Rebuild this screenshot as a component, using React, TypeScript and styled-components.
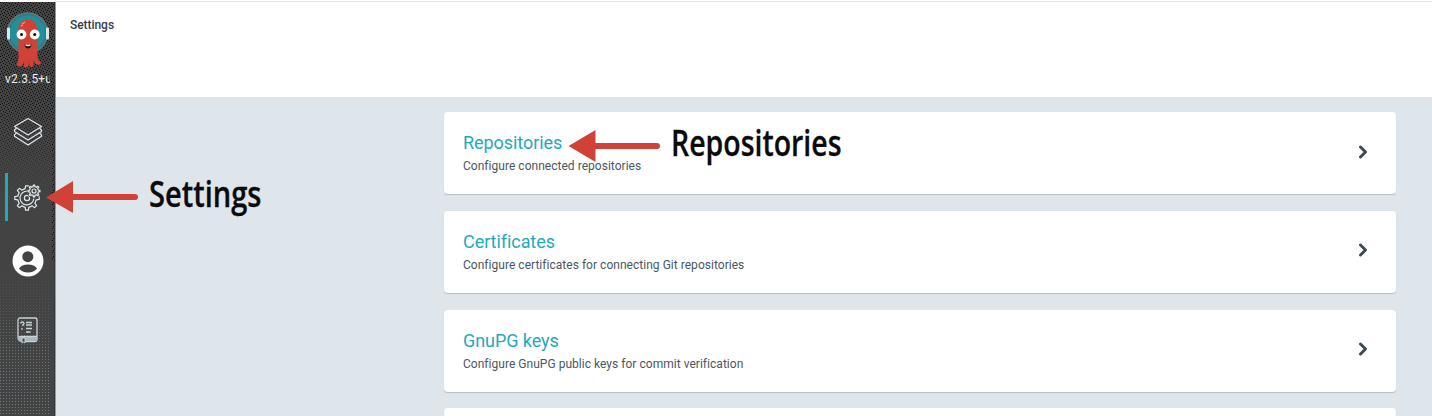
import React from "react";
import styled, { createGlobalStyle } from "styled-components";

const GlobalStyle = createGlobalStyle`
  * { box-sizing: border-box; }
  body { margin: 0; font-family: Roboto, "Liberation Sans", sans-serif; background: #fff; overflow: hidden; }
`;

const Page = styled.div`
  position: relative;
  display: flex;
  width: 1432px;
  height: 416px;
  padding-top: 1px;
  overflow: hidden;
  background: #fff;
`;

const Sidebar = styled.nav`
  position: relative;
  display: flex;
  flex-direction: column;
  align-items: flex-start;
  flex: 0 0 56px;
  margin-top: 1px;
  border-right: 1px solid #8f999f;
  background: #434343;
`;

const Grain = styled.svg`
  position: absolute;
  inset: 0;
  width: 55px;
  height: 414px;
`;

const Brand = styled.div`
  position: relative;
  height: 88px;
  width: 55px;
  padding: 9px 5px 0;
  svg { display: block; margin-left: 1px; }
`;

const Version = styled.div`
  width: 45px;
  margin-top: 2px;
  overflow: hidden;
  white-space: nowrap;
  color: #e6ecee;
  font-size: 12px;
  line-height: 14px;
  letter-spacing: 0.15px;
`;

const NavItem = styled.a<{ $height: number; $active?: boolean }>`
  position: relative;
  display: flex;
  align-items: center;
  justify-content: center;
  width: 45px;
  height: ${(p) => p.$height}px;
  box-shadow: ${(p) => (p.$active ? "inset 3px 0 #22aabb" : "none")};
  svg { display: block; }
`;

const NavList = styled.div`
  position: relative;
  display: flex;
  flex-direction: column;
  align-items: center;
  padding: 18px 5px 0;
  gap: 17px;
`;

const Main = styled.main`
  flex: 1;
  border-top: 1px solid #dee4e8;
  background: #dee5eb;
`;

const Header = styled.header`
  height: 95px;
  padding: 15px 0 0 14px;
  background: #fff;
  color: #363c4a;
  font-size: 12px;
  font-weight: 500;
  line-height: 16px;
  letter-spacing: -0.05px;
`;

const CardList = styled.div`
  display: flex;
  flex-direction: column;
  gap: 16.7px;
  width: 952px;
  margin: 15.2px 0 0 388px;
`;

const Card = styled.section`
  display: flex;
  align-items: center;
  justify-content: space-between;
  flex: 0 0 82px;
  padding: 0 28px 3px 19px;
  border-radius: 4px;
  background: #fff;
  box-shadow: 0 1px 1px #b4bdc3;
`;

const CardTitle = styled.h2`
  margin: 2.500px 0 3px;
  color: #1faabb;
  font-size: 18px;
  font-weight: 400;
  line-height: 24px;
  letter-spacing: -0.06px;
`;

const CardText = styled.p`
  margin: 0;
  color: #495763;
  font-size: 12px;
  line-height: 16px;
  letter-spacing: 0.03px;
`;

const Annotations = styled.svg`
  position: absolute;
  inset: 0;
  pointer-events: none;
  text {
    font-family: "Open Sans", "Noto Sans", sans-serif;
    font-weight: 600;
    fill: #0b0b0d;
    stroke: #0b0b0d;
    stroke-width: 0.3px;
  }
`;

const Logo = () => (
  <svg width="43" height="59" viewBox="0 0 43 59">
    <circle cx="21.5" cy="22" r="20" fill="#277f88" stroke="#5c7b80" strokeWidth="1.500" />
    <circle cx="21.5" cy="22" r="17.500" fill="#258f99" />
    <rect x="1" y="16.500" width="3" height="12" rx="1" fill="#dce5e8" />
    <rect x="40" y="16.500" width="3" height="12" rx="1" fill="#dce5e8" />
    <path
      d="M12.500 24V18.500C12.500 12 16 8.500 21.500 8.500S31.500 12 31.500 18.500V45C31.500 50 34 50 35 51.500 34.500 54.500 30 54.500 28.500 51L27.500 49C27.500 52 28.500 56 25.500 56S23.500 53 23 50C22.500 53 23.500 56.500 20 56.500S18 53 18 50C17 52 17 55.500 14 55.500 11 55.500 12 54 10.500 53.500 11.500 52 12.500 50 12.500 46Z"
      fill="#d04238"
    />
    <path d="m16 13 3-2M15 15l2-1" stroke="#e99a91" strokeWidth="1.300" />
    <circle cx="15.500" cy="23.500" r="4.900" fill="#fff" />
    <circle cx="28.700" cy="23.500" r="4.900" fill="#fff" />
    <circle cx="15.500" cy="23.500" r="1.500" fill="#111" />
    <circle cx="28.700" cy="23.500" r="1.500" fill="#111" />
    <path d="M18.500 33q3.500 2 7 0-.5 4.500-3.500 4.500T18.500 33Z" fill="#171717" />
    <path d="M19.500 33.800q2.500 1.500 5 0" stroke="#fff" strokeWidth="1.300" fill="none" />
  </svg>
);

const Layers = () => (
  <svg width="30" height="30" viewBox="0 0 30 30" fill="none" stroke="#dfe9ec" strokeWidth="1.200" strokeLinejoin="round">
    <path d="M15 1.500 28.500 9.500 15 18 1.500 9.500Z" />
    <path d="m3.500 11.200-2 1.800v1.500L15 23l13.500-8.500V13l-2-1.800" />
    <path d="m3.500 16.100-2 1.600v1.600L15 28l13.500-8.700v-1.600l-2-1.600" />
  </svg>
);

const gear = (cx: number, cy: number, outer: number, inner: number, teeth: number) => {
  const step = (Math.PI * 2) / teeth;
  const points: string[] = [];
  for (let i = 0; i < teeth; i++) {
    [[-0.24, inner], [-0.15, outer], [0.15, outer], [0.24, inner]].forEach(([offset, radius]) => {
      const angle = (i + offset) * step + Math.PI / 2;
      points.push(`${(cx + Math.cos(angle) * radius).toFixed(2)},${(cy + Math.sin(angle) * radius).toFixed(2)}`);
    });
  }
  return points.join(" ");
};

const Gears = () => (
  <svg width="27" height="27" viewBox="0 0 27 27" fill="none" stroke="#dfe9ec" strokeWidth="1.200" strokeLinejoin="round">
    <polygon points={gear(13, 14, 12.3, 9.5, 8)} />
    <path d="M14 7.200A6.900 6.900 0 1 0 19.800 14.500" />
    <circle cx="13" cy="14" r="2.600" />
    <circle cx="20" cy="7" r="7.300" fill="#434343" stroke="none" />
    <polygon points={gear(20, 7, 6, 4.5, 8)} />
    <circle cx="20" cy="7" r="2" />
  </svg>
);

const User = () => (
  <svg width="32" height="32" viewBox="0 0 32 32">
    <circle cx="16" cy="16" r="15.500" fill="#fff" />
    <circle cx="15.800" cy="11.700" r="5.500" fill="#434343" />
    <path d="M7 23.500q2.500-4 9-4t9 4Q22 27.500 16 27.500T7 23.500Z" fill="#434343" />
  </svg>
);

const Docs = () => (
  <svg width="21" height="27" viewBox="0 0 21 27" fill="none" stroke="#c7d3d7" strokeWidth="1.300">
    <path d="M5 24H3q-2-1-2-3V3.500Q1 1 3.500 1H18q2 0 2 2v20q0 1.500-2 1.500H8" />
    <path d="M3 20h17v4H8v1.500l-1.500-1-2 1V24H2q-1-3 1-4Z" fill="#aab8bd" stroke="none" />
    <path d="M1.500 20.500Q2 19.500 4 19.500h16M3.700 6.500q0-1.500 1.500-1.500T7 6.500Q7 8 5 8.500M5 11v1.800M9 5.500h6M9 8h6M9 11.500h6M9 15h4.500" />
    <path d="M5 21v5l1.500-1L8 26v-5Z" fill="#434343" strokeWidth="1" />
  </svg>
);

const Chevron = () => (
  <svg width="10" height="14" viewBox="0 0 10 14" fill="none" stroke="#3d494f" strokeWidth="2.900" strokeLinecap="round" strokeLinejoin="round">
    <path d="m2.500 2 5 5-5 5" />
  </svg>
);

const sections = [
  { title: "Repositories", text: "Configure connected repositories" },
  { title: "Certificates", text: "Configure certificates for connecting Git repositories" },
  { title: "GnuPG keys", text: "Configure GnuPG public keys for commit verification" },
  { title: "", text: "" },
];

export default function App() {
  return (
    <Page>
      <GlobalStyle />
      <Sidebar>
        <Grain>
          <defs>
            <pattern id="dark" width="6" height="6" patternUnits="userSpaceOnUse">
              <path d="M0 0h1v1H0zM3 1h1v1H3zM1 3h1v1H1zM4 4h1v1H4zM5 2h1v1H5zM2 5h1v1H2z" fill="#080808" />
            </pattern>
            <pattern id="light" width="3" height="3" patternUnits="userSpaceOnUse">
              <path d="M0 0h1v1H0z" fill="#71878a" />
            </pattern>
            <linearGradient id="fadeDown" x2="0" y2="1">
              <stop offset="0" stopColor="#fff" />
              <stop offset=".25" stopColor="#fff" stopOpacity=".85" />
              <stop offset=".48" stopColor="#fff" stopOpacity="0" />
            </linearGradient>
            <linearGradient id="fadeUp" x2="0" y2="1">
              <stop offset=".64" stopColor="#fff" stopOpacity="0" />
              <stop offset=".9" stopColor="#fff" stopOpacity=".9" />
            </linearGradient>
            <mask id="topMask"><rect width="55" height="414" fill="url(#fadeDown)" /></mask>
            <mask id="bottomMask"><rect width="55" height="414" fill="url(#fadeUp)" /></mask>
          </defs>
          <rect width="55" height="414" fill="url(#dark)" mask="url(#topMask)" />
          <rect width="51" height="414" fill="url(#light)" mask="url(#bottomMask)" />
          <rect x="52" width="3" height="260" fill="url(#dark)" />
          <rect x="54" width="1" height="414" fill="#303437" opacity=".7" />
        </Grain>
        <Brand>
          <Logo />
          <Version>v2.3.5+unknown</Version>
        </Brand>
        <NavList>
          <NavItem $height={48}><Layers /></NavItem>
          <NavItem $height={48} $active><Gears /></NavItem>
          <NavItem $height={46}><User /></NavItem>
          <NavItem $height={58}><Docs /></NavItem>
        </NavList>
      </Sidebar>
      <Main>
        <Header>Settings</Header>
        <CardList>
          {sections.map((section, i) => (
            <Card key={i}>
              {section.title && (
                <>
                  <div>
                    <CardTitle>{section.title}</CardTitle>
                    <CardText>{section.text}</CardText>
                  </div>
                  <Chevron />
                </>
              )}
            </Card>
          ))}
        </CardList>
      </Main>
      <Annotations width="1432" height="416">
        <path d="M73 197H135" stroke="#d04238" strokeWidth="6" strokeLinecap="round" />
        <path d="M46 197.500 73 181v32Z" fill="#d04238" />
        <path d="M595 146H657" stroke="#d04238" strokeWidth="6" strokeLinecap="round" />
        <path d="M568.500 146 595.500 130v32Z" fill="#d04238" />
        <text x="149" y="206.500" fontSize="35.500" textLength="112.500" lengthAdjust="spacingAndGlyphs">Settings</text>
        <text x="671" y="155.500" fontSize="35.500" textLength="170.500" lengthAdjust="spacingAndGlyphs">Repositories</text>
      </Annotations>
    </Page>
  );
}
